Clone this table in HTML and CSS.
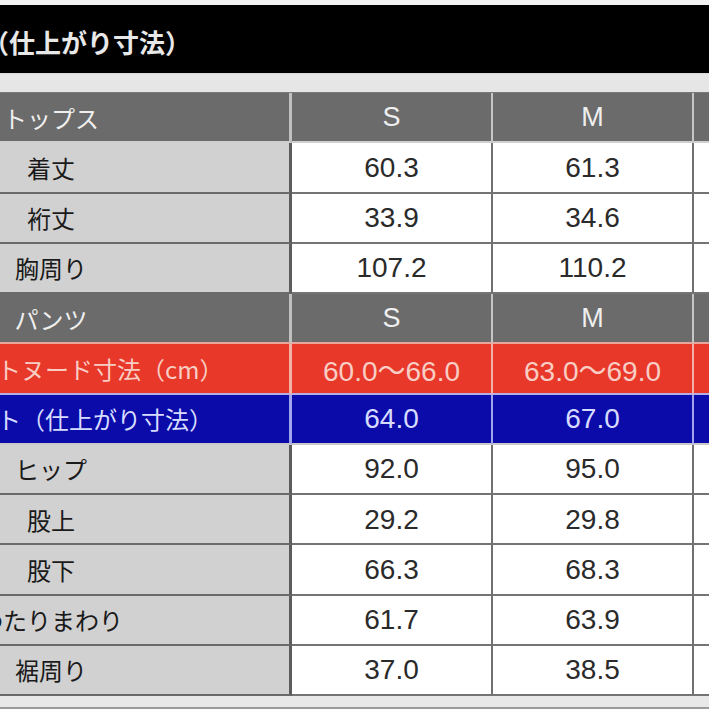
FILE: index.html
```html
<!DOCTYPE html>
<html lang="ja">
<head>
<meta charset="utf-8">
<title>サイズ表</title>
<link rel="stylesheet" href="styles.css">
</head>
<body>
<div class="sheet">
  <div class="top-band"></div>
  <div class="title"><span class="title-text">（仕上がり寸法）</span></div>
  <div class="gap-band"></div>
  <div class="chart">
    <div class="row row--head">
      <div class="c label">トップス</div><div class="c">S</div><div class="c">M</div><div class="c"></div>
    </div>
    <div class="row">
      <div class="c label">着丈</div><div class="c num">60.3</div><div class="c num">61.3</div><div class="c"></div>
    </div>
    <div class="row">
      <div class="c label">裄丈</div><div class="c num">33.9</div><div class="c num">34.6</div><div class="c"></div>
    </div>
    <div class="row">
      <div class="c label">胸周り</div><div class="c num">107.2</div><div class="c num">110.2</div><div class="c"></div>
    </div>
    <div class="row row--head row--head2">
      <div class="c label">パンツ</div><div class="c">S</div><div class="c">M</div><div class="c"></div>
    </div>
    <div class="row row--red">
      <div class="c label label--left">トヌード寸法（cm）</div><div class="c num">60.0〜66.0</div><div class="c num">63.0〜69.0</div><div class="c"></div>
    </div>
    <div class="row row--blue">
      <div class="c label label--left">ト（仕上がり寸法）</div><div class="c num">64.0</div><div class="c num">67.0</div><div class="c"></div>
    </div>
    <div class="row">
      <div class="c label">ヒップ</div><div class="c num">92.0</div><div class="c num">95.0</div><div class="c"></div>
    </div>
    <div class="row">
      <div class="c label">股上</div><div class="c num">29.2</div><div class="c num">29.8</div><div class="c"></div>
    </div>
    <div class="row">
      <div class="c label">股下</div><div class="c num">66.3</div><div class="c num">68.3</div><div class="c"></div>
    </div>
    <div class="row">
      <div class="c label">わたりまわり</div><div class="c num">61.7</div><div class="c num">63.9</div><div class="c"></div>
    </div>
    <div class="row">
      <div class="c label">裾周り</div><div class="c num">37.0</div><div class="c num">38.5</div><div class="c"></div>
    </div>
  </div>
  <div class="foot-band"></div>
</div>
</body>
</html>
```
FILE: styles.css
```css
html, body {
  margin: 0;
  padding: 0;
  background: #e9e9e9;
}
body {
  width: 709px;
  height: 709px;
  overflow: hidden;
}
.sheet {
  width: 709px;
  height: 709px;
  overflow: hidden;
  display: flex;
  flex-direction: column;
}
.top-band {
  height: 5px;
  background: #f3f3f3;
  flex: none;
}
.title {
  height: 68px;
  flex: none;
  background: #000;
  display: flex;
  align-items: center;
  padding-top: 5px;
  box-sizing: border-box;
}
.title-text {
  margin-left: -17px;
  font-family: "Noto Sans CJK JP", sans-serif;
  font-weight: 700;
  font-size: 26px;
  color: #e8e8e8;
  white-space: nowrap;
}
.gap-band {
  height: 19px;
  flex: none;
  background: #e6e6e6;
  border-top: 1px solid #d8d8d8;
  box-sizing: border-box;
}
.chart {
  flex: none;
  display: grid;
  grid-template-columns: 479px 201px 201px 201px;
  grid-auto-rows: 50.25px;
  margin-left: -187px;
  border-top: 1px solid #7a7a7a;
}
.row {
  display: contents;
}
.c {
  box-sizing: border-box;
  display: flex;
  align-items: center;
  justify-content: center;
  background: #fff;
  border-right: 2px solid #707070;
  border-bottom: 2px solid #747474;
  font-family: "Liberation Sans", "Noto Sans CJK JP", sans-serif;
  font-size: 27px;
  color: #2a2a2a;
  white-space: nowrap;
  overflow: hidden;
}
.num {
  font-size: 28px;
  padding-top: 1px;
}
.label {
  background: #d1d1d1;
  border-right: 3px solid #5c5c5c;
  border-bottom-color: #6a6a6a;
  font-family: "Noto Sans CJK JP", sans-serif;
  font-size: 24px;
  color: #1a1a1a;
}
.label--left {
  justify-content: flex-start;
  padding-left: 184px;
  font-size: 24px;
}
.row--head .c {
  background: #6b6b6b;
  color: #efefef;
  border-right-color: #c6c6c6;
  border-bottom-color: #cfcfcf;
}
.row--head .label {
  border-right-color: #c0c0c0;
}
.row--head2 .c {
  border-bottom-color: #e7a59c;
}
.row--red .c {
  background: #e8382a;
  color: #f8cdc4;
  border-right-color: #f2b2a8;
  border-bottom-color: #b7ade6;
}
.row--blue .c {
  background: #0b0baa;
  color: #d6dcff;
  border-right-color: #a0a4ec;
  border-bottom-color: #c9c9c9;
}
.foot-band {
  flex: 1;
  background: #e8e8e8;
  border-bottom: 2px solid #9a9a9a;
}
```
